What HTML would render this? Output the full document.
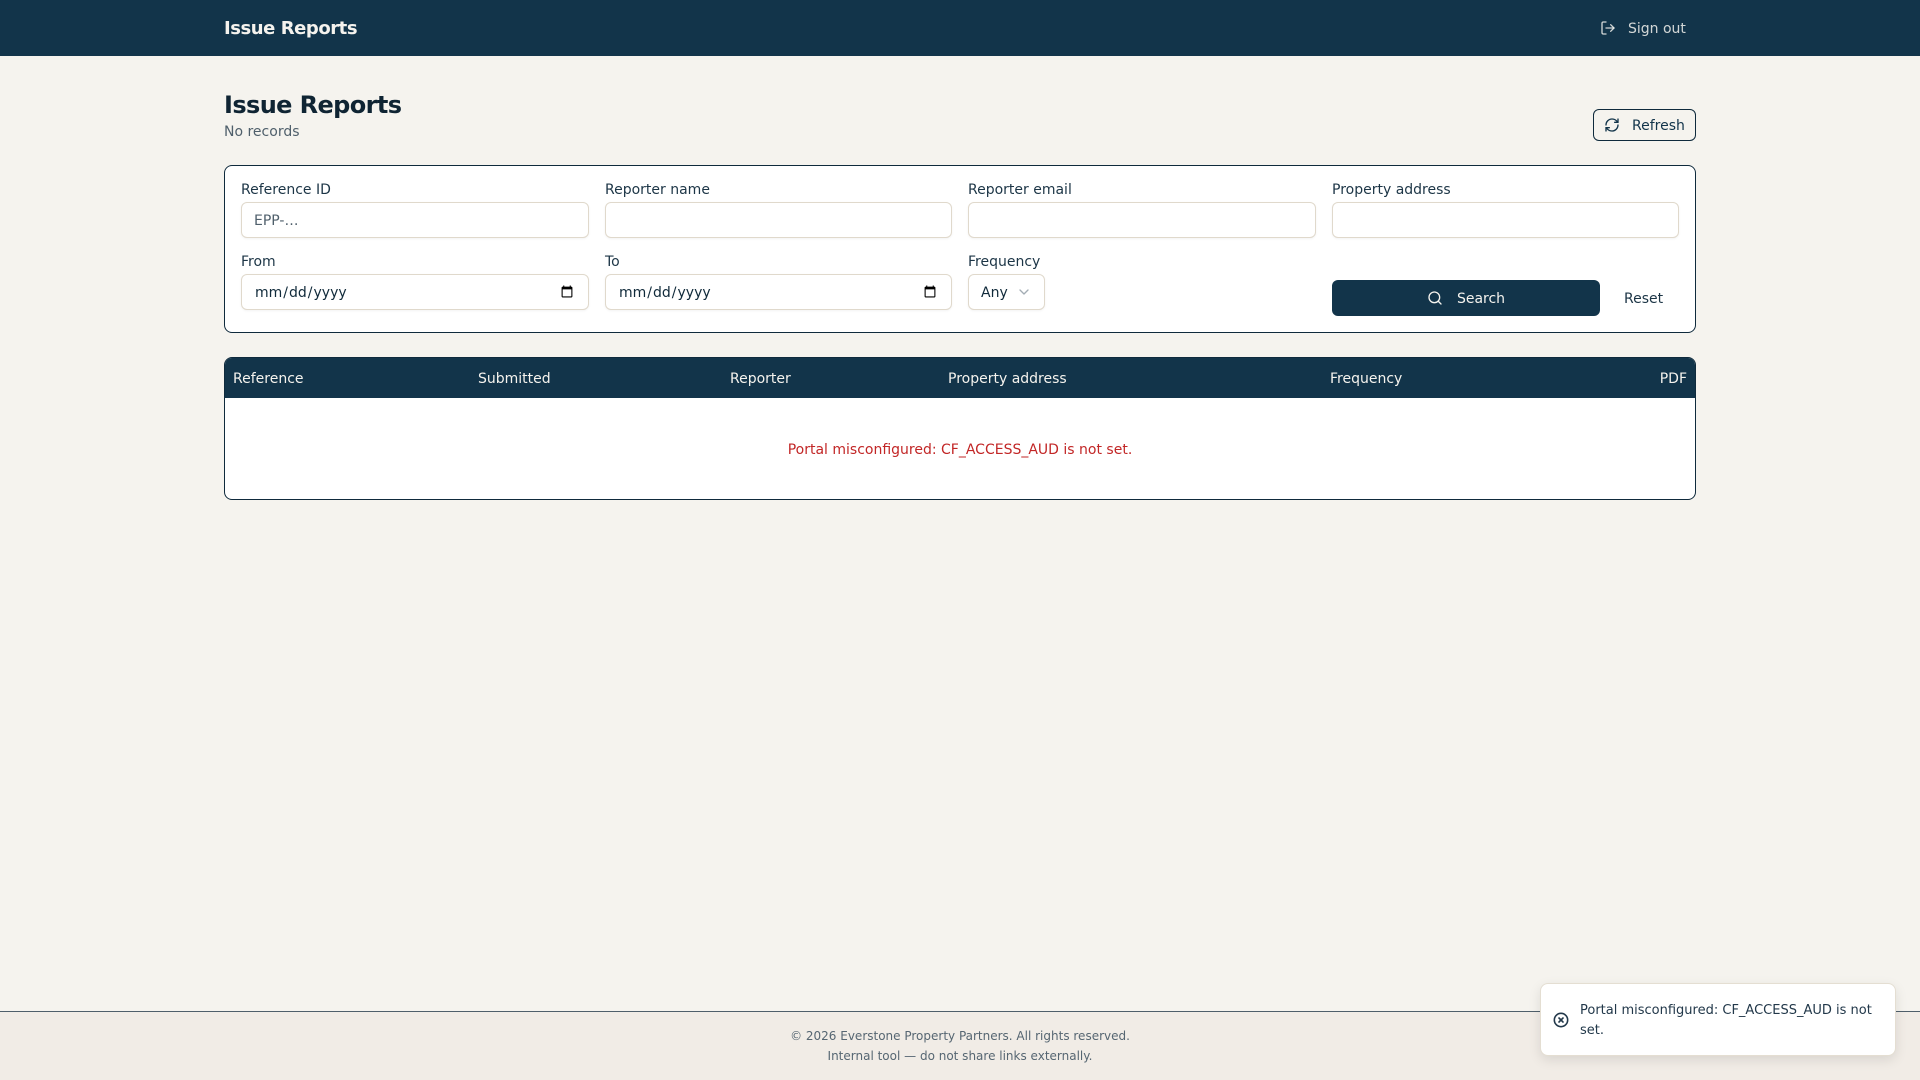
<!DOCTYPE html>
<html lang="en">
<head>
<meta charset="utf-8">
<title>Issue Reports</title>
<style>
*{box-sizing:border-box}
html,body{margin:0;padding:0}
body{width:1920px;height:1080px;position:relative;overflow:hidden;background:#f5f3ee;font-family:"DejaVu Sans",sans-serif;font-size:14px;line-height:20px;color:#102a3a}
svg{display:block;fill:none;stroke:currentColor;stroke-width:2;stroke-linecap:round;stroke-linejoin:round}
.t{position:relative;top:1px}
.topbar{position:absolute;left:0;top:0;width:1920px;height:56px;background:#12344a}
.brand{position:absolute;left:224px;top:16px;font-size:18px;line-height:26px;font-weight:700;letter-spacing:-.45px;color:#f5f3ee}
.signout{position:absolute;left:1592px;top:16px;height:24px;width:104px;color:rgba(245,243,238,.85);display:flex;align-items:center;padding-left:8px;gap:12px}
h1{position:absolute;left:224px;top:89px;margin:0;font-size:24px;line-height:32px;font-weight:700;letter-spacing:-.6px;color:#0f2433}
.sub{position:absolute;left:224px;top:122px;color:#4f5f6b}
.refresh{position:absolute;left:1593px;top:109px;width:103px;height:32px;border:1px solid #0f2a3c;border-radius:6px;display:flex;align-items:center;padding-left:10px;gap:12px;color:#12344a}
.card{position:absolute;left:224px;top:165px;width:1472px;height:168px;background:#fff;border:1px solid #0f2a3c;border-radius:8px}
.lab{position:absolute;color:#1c3546}
.inp{position:absolute;height:36px;margin:0;padding:2px 12px 0;background:#fff;border:1px solid #e0d9cc;border-radius:6px;font:14px "DejaVu Sans",sans-serif;color:#102a3a;box-shadow:0 1px 2px rgba(0,0,0,.05);outline:none}
.inp::placeholder{color:#4f5f6b;opacity:1}
.inp::-webkit-calendar-picker-indicator{position:relative;top:-1px}
.sel{position:absolute;height:36px;width:77px;background:#fff;border:1px solid #e0d9cc;border-radius:6px;box-shadow:0 1px 2px rgba(0,0,0,.05);display:flex;align-items:center;padding-left:12px;justify-content:space-between;padding-right:12px}
.search{position:absolute;left:1107px;top:114px;width:268px;height:36px;background:#12344a;color:#f5f3ee;border-radius:6px;display:flex;align-items:center;justify-content:center;gap:14px}
.reset{position:absolute;left:1399px;top:123px;color:#1c3546}
.tbl{position:absolute;left:224px;top:357px;width:1472px;height:143px;background:#fff;border:1px solid #0f2a3c;border-radius:8px;overflow:hidden}
.thead{position:absolute;left:0;top:0;width:1470px;height:40px;background:#12344a;color:#f5f3ee}
.thead span{position:absolute;top:11px}
.err{position:absolute;left:0;top:82px;width:1470px;text-align:center;color:#c22626}
.foot{position:absolute;left:0;top:1011px;width:1920px;height:69px;background:#f1ece6;border-top:1px solid #4f5f6b;text-align:center;font-size:12px;color:#566672;padding-top:14px}
.foot div{height:20px;line-height:20px}
.toast{position:absolute;left:1540px;top:983px;width:356px;height:73px;background:#fff;border:1px solid #e4ded2;border-radius:8px;box-shadow:0 4px 12px rgba(0,0,0,.1);font-size:13px;color:#22384a;display:flex;align-items:center;padding:0 12px}
.toast .ic{width:20px;flex:none;margin-right:7px;margin-top:1px}
.toast .msg{position:relative;top:1px}
</style>
</head>
<body>
<header class="topbar">
  <div class="brand">Issue Reports</div>
  <div class="signout">
    <svg width="16" height="16" viewBox="0 0 24 24"><path d="M9 21H5a2 2 0 0 1-2-2V5a2 2 0 0 1 2-2h4"/><path d="m16 17 5-5-5-5"/><path d="M21 12H9"/></svg>
    <span class="t">Sign out</span>
  </div>
</header>

<h1>Issue Reports</h1>
<div class="sub">No records</div>
<div class="refresh">
  <svg width="16" height="16" viewBox="0 0 24 24"><path d="M3 12a9 9 0 0 1 9-9 9.75 9.75 0 0 1 6.74 2.74L21 8"/><path d="M21 3v5h-5"/><path d="M21 12a9 9 0 0 1-9 9 9.75 9.75 0 0 1-6.74-2.74L3 16"/><path d="M8 16H3v5"/></svg>
  <span class="t">Refresh</span>
</div>

<section class="card">
  <label class="lab" style="left:16px;top:14px">Reference ID</label>
  <input class="inp" style="left:16px;top:36px;width:348px" placeholder="EPP-…">
  <label class="lab" style="left:380px;top:14px">Reporter name</label>
  <input class="inp" style="left:380px;top:36px;width:347px">
  <label class="lab" style="left:743px;top:14px">Reporter email</label>
  <input class="inp" style="left:743px;top:36px;width:348px">
  <label class="lab" style="left:1107px;top:14px">Property address</label>
  <input class="inp" style="left:1107px;top:36px;width:347px">

  <label class="lab" style="left:16px;top:86px">From</label>
  <input class="inp" type="date" style="left:16px;top:108px;width:348px">
  <label class="lab" style="left:380px;top:86px">To</label>
  <input class="inp" type="date" style="left:380px;top:108px;width:347px">
  <label class="lab" style="left:743px;top:86px">Frequency</label>
  <div class="sel" style="left:743px;top:108px">
    <span class="t">Any</span>
    <svg width="16" height="16" viewBox="0 0 24 24" style="color:#a3adb4"><path d="m6 9 6 6 6-6"/></svg>
  </div>

  <div class="search">
    <svg width="16" height="16" viewBox="0 0 24 24"><circle cx="11" cy="11" r="8"/><path d="m21 21-4.3-4.3"/></svg>
    <span class="t">Search</span>
  </div>
  <div class="reset">Reset</div>
</section>

<section class="tbl">
  <div class="thead">
    <span style="left:8px">Reference</span>
    <span style="left:253px">Submitted</span>
    <span style="left:505px">Reporter</span>
    <span style="left:723px">Property address</span>
    <span style="left:1105px">Frequency</span>
    <span style="right:8px">PDF</span>
  </div>
  <div class="err">Portal misconfigured: CF_ACCESS_AUD is not set.</div>
</section>

<footer class="foot">
  <div>© 2026 Everstone Property Partners. All rights reserved.</div>
  <div>Internal tool — do not share links externally.</div>
</footer>

<div class="toast">
  <div class="ic"><svg width="16" height="16" viewBox="0 0 24 24" style="stroke-width:2.4"><circle cx="12" cy="12" r="10"/><path d="m15 9-6 6"/><path d="m9 9 6 6"/></svg></div>
  <div class="msg">Portal misconfigured: CF_ACCESS_AUD is not set.</div>
</div>
</body>
</html>
